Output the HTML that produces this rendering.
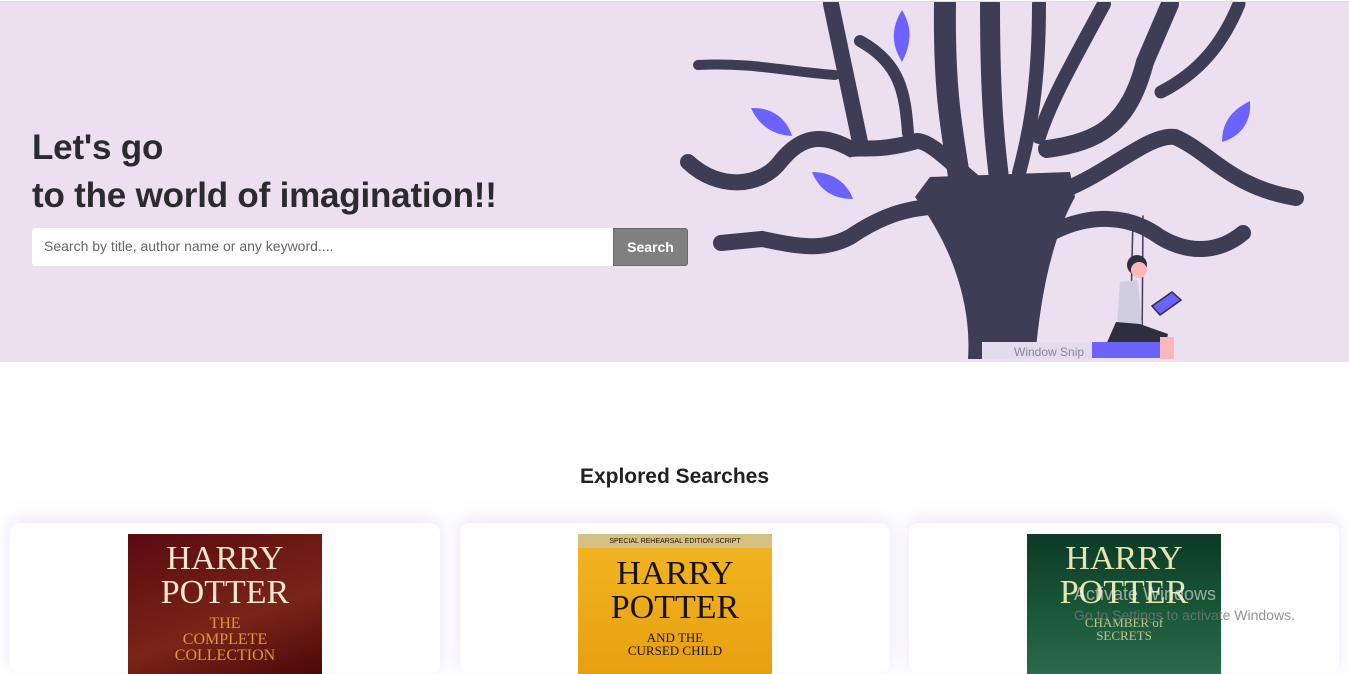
<!DOCTYPE html>
<html><head><meta charset="utf-8"><style>
*{margin:0;padding:0;box-sizing:border-box}
body{width:1349px;height:659px;overflow:hidden;background:#fff;font-family:"Liberation Sans",sans-serif;position:relative}
.hero{position:absolute;left:0;top:1px;width:1349px;height:361px;background:#ebdff0;border-top:1px solid #ddd}
h1{position:absolute;left:32px;top:122px;font-size:35px;line-height:48px;font-weight:bold;color:#2b2b2f;letter-spacing:-0.2px}
.search{position:absolute;left:32px;top:226px;width:581px;height:38px;background:#fff;border-radius:3px 0 0 3px;font-size:14px;color:#666;padding:10px 12px}
.btn{position:absolute;left:613px;top:226px;width:75px;height:38px;background:#808080;color:#fff;font-weight:bold;font-size:14px;text-align:center;line-height:36px;border-radius:0 3px 3px 0;border:1px solid #6a6a6a}
h2{position:absolute;top:465px;width:100%;text-align:center;font-size:21px;color:#222}
.card{position:absolute;top:523px;width:430px;height:150px;background:#fff;border-radius:10px;box-shadow:0 -4px 18px rgba(200,180,235,.35)}
.cover{position:absolute;top:11px;left:118px;width:194px;height:140px;text-align:center;font-family:"Liberation Serif",serif;line-height:1}
.cover .t{font-size:34px;padding-top:8px}
.cover .s{font-size:16px;margin-top:6px}
.aw{position:absolute;left:1074px;top:584px;color:rgba(255,255,255,.55);font-size:18px}
.aw2{position:absolute;left:1074px;top:607px;color:rgba(120,120,120,.8);font-size:14px}
</style></head><body>
<div class="hero">
<h1>Let's go<br>to the world of imagination!!</h1>
<div class="search">Search by title, author name or any keyword....</div>
<div class="btn">Search</div>
<svg width="1349" height="361" style="position:absolute;left:0;top:0" fill="none" stroke="#3f3d56" stroke-linecap="round">
<path d="M968 357 C972 300 950 240 915 195 L930 175 L1070 170 L1075 195 C1050 240 1040 300 1035 357Z" fill="#3f3d56" stroke="none"/>
<g>
<path d="M974 180 C950 160 930 139 917 139 C880 150 860 145 851 147 C820 130 800 135 780 160 C762 184 720 190 688 160" stroke-width="16"/>
<path d="M860 140 L831 2" stroke-width="16"/>
<path d="M908 131 C905 90 900 61 860 39" stroke-width="12"/>
<path d="M835 73 C790 70 750 60 698 63" stroke-width="10"/>
<path d="M945 204 C910 205 884 212 850 235 C823 249 800 245 762 237 L721 241" stroke-width="16"/>
<path d="M960 180 C950 120 944 82 945 2" stroke-width="22"/>
<path d="M1000 184 C993 130 990 82 990 2" stroke-width="20"/>
<path d="M1019 171 C1030 130 1039 82 1039 2" stroke-width="14"/>
<path d="M1039 135 C1050 100 1072 61 1104 2" stroke-width="14"/>
<path d="M1047 147 C1100 140 1129 122 1145 60 L1170 2" stroke-width="18"/>
<path d="M1161 90 C1200 70 1223 41 1239 2" stroke-width="13"/>
<path d="M1064 188 C1110 170 1150 131 1175 135 C1210 150 1230 185 1296 196" stroke-width="16"/>
<path d="M1055 229 C1090 212 1129 212 1160 235 C1190 253 1220 250 1243 231" stroke-width="16"/>
</g>
<g fill="#6c63ff" stroke="none">
<path d="M902 8 C912 25 912 40 902 60 C890 40 892 25 902 8Z"/>
<path d="M751 106 C775 105 788 120 792 134 C770 133 757 120 751 106Z"/>
<path d="M812 170 C835 170 848 183 853 197 C830 197 818 185 812 170Z"/>
<path d="M1250 99 C1252 120 1240 135 1222 140 C1222 120 1232 108 1250 99Z"/>
</g>
<path d="M1133 214 L1130 350 M1143 214 L1142 350" stroke="#3f3d56" stroke-width="1.5"/>
<circle cx="1137" cy="263" r="10" fill="#2f2e41" stroke="none"/>
<circle cx="1139" cy="268" r="8" fill="#ffb8b8" stroke="none"/>
<path d="M1120 280 L1138 278 L1143 335 L1116 340Z" fill="#d0cde1" stroke="none"/>
<path d="M1116 320 L1140 322 L1168 332 L1165 345 L1105 345Z" fill="#2f2e41" stroke="none"/>
<rect x="1092" y="340" width="68" height="16" fill="#6c63ff" stroke="none"/>
<rect x="1160" y="335" width="14" height="22" fill="#ffb8b8" stroke="none"/>
<path d="M1152 304 L1172 290 L1181 298 L1160 313Z" fill="#6c63ff" stroke="#2f2e41" stroke-width="1.5"/>
<rect x="982" y="340" width="110" height="17" fill="#e3dbee" stroke="none"/>
<text x="1014" y="354" fill="#8a8595" stroke="none" font-size="12" font-family="Liberation Sans">Window Snip</text>
</svg>
</div>
<h2>Explored Searches</h2>
<div class="card" style="left:10px"><div class="cover" style="background:linear-gradient(160deg,#5a0a10,#7a2418 60%,#4a0808);color:#f2e6d0"><div class="t">HARRY<br>POTTER</div><div class="s" style="color:#d89a40">THE<br>COMPLETE<br>COLLECTION</div></div></div>
<div class="card" style="left:460px"><div class="cover" style="background:linear-gradient(180deg,#d8c080 0,#d8c080 14px,#f0b420 14px,#e8a010);color:#1a1208"><div style="font-size:7px;padding-top:4px;font-family:'Liberation Sans'">SPECIAL REHEARSAL EDITION SCRIPT</div><div class="t" style="padding-top:12px">HARRY<br>POTTER</div><div class="s" style="font-size:13px">AND THE<br>CURSED CHILD</div></div></div>
<div class="card" style="left:909px"><div class="cover" style="background:linear-gradient(180deg,#0c3a26,#1a5a3a 60%,#2a6a4a);color:#e8e4b0"><div class="t">HARRY<br>POTTER</div><div class="s" style="font-size:13px;color:#c8c090">CHAMBER of<br>SECRETS</div></div></div>
<div class="aw">Activate Windows</div>
<div class="aw2">Go to Settings to activate Windows.</div>
</body></html>
